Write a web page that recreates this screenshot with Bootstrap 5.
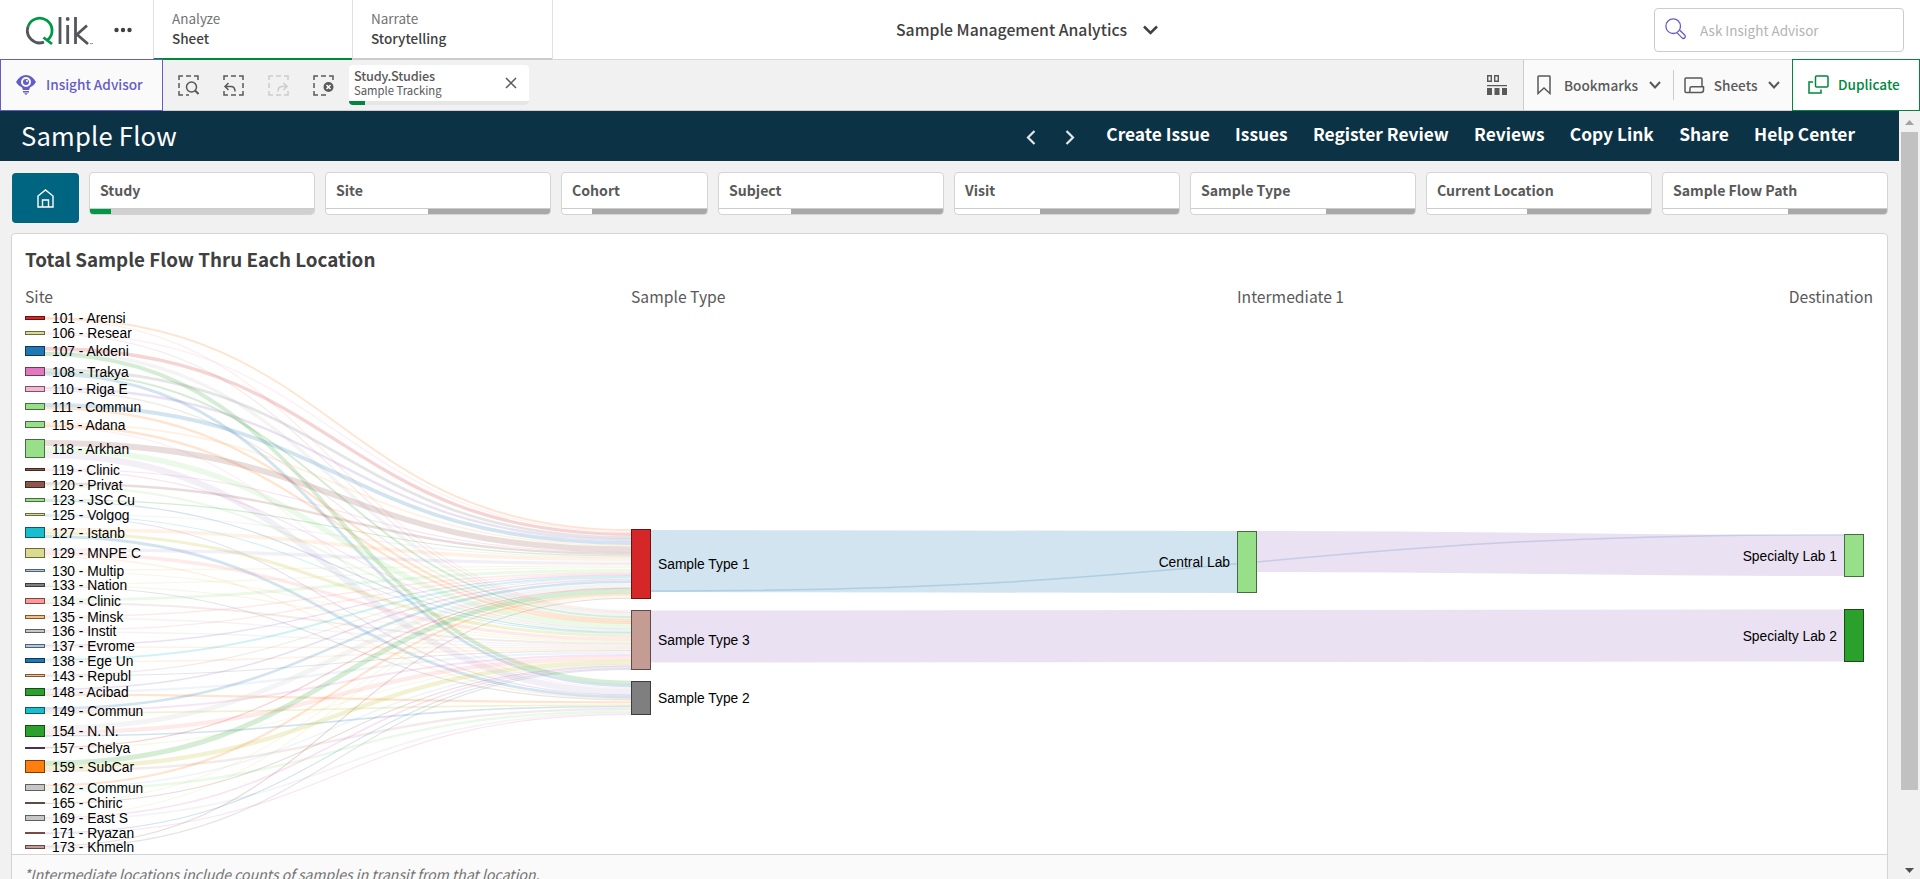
<!DOCTYPE html>
<html lang="en">
<head>
  <meta charset="UTF-8" />
  <title>Sample Management Analytics</title>
  <link href="https://cdn.jsdelivr.net/npm/bootstrap@5.3.3/dist/css/bootstrap.min.css" rel="stylesheet">
  <style>
    body { font-family: "Noto Sans CJK SC", "Noto Sans", sans-serif; background: #f1f1f1; color: #404040; height: 879px; overflow: hidden; line-height: 1.2; }
    svg { display: block; flex: none; }
    svg.ico { fill: none; stroke: #595959; stroke-width: 1.5; }

    .topbar { height: 60px; background: #fff; border-bottom: 1px solid #d9d9d9; }
    .brand-box { width: 153px; padding-left: 25px; }
    .mode-tab { width: 200px; height: 60px; border-left: 1px solid #e0e0e0; border-bottom: 2px solid #ccc; padding: 8px 0 0 18px; font-size: 13.5px; line-height: 20px; color: #737373; }
    .mode-tab.on { width: 199px; border-bottom-color: #00873d; }
    .mode-tab b { display: block; color: #404040; font-weight: 500; }
    .app-name { font-size: 15.75px; font-weight: 500; margin-left: 343px; padding-top: 1px; }
    .app-name svg { stroke: #404040; stroke-width: 2.5; }
    .ask-box { width: 250px; height: 44px; border: 1px solid #ccc; border-radius: 4px; margin-right: 16px; padding: 2px 0 0 10px; font-size: 13.5px; color: #b3b3b3; }
    .ask-box svg { margin: -4px 13px 0 0; }

    .toolbar { height: 51px; border-bottom: 1px solid #d0d0d0; font-size: 13.6px; font-weight: 500; color: #595959; }
    .advisor { width: 163px; height: 52px; margin-top: -1px; border: 1px solid #655dc6; background: #fafafa; color: #655dc6; padding-left: 15px; }
    .sel-tools { gap: 24px; padding: 0 15px; }
    .sel-chip { width: 180px; height: 40px; background: #fff; border-radius: 4px; overflow: hidden; font-size: 12.7px; line-height: 14px; letter-spacing: -.2px; }
    .sel-name { height: 36px; padding: 4px 8px 4px 5px; }
    .sel-name svg { margin-top: 8px; }
    .sel-chip .lower { font-size: 11.3px; font-weight: 400; letter-spacing: 0; }
    .sel-bar { height: 4px; background: #e6e6e6; }
    .sel-bar div { width: 16px; height: 4px; background: #00873d; }
    .tool-group { background: #fafafa; border-left: 1px solid #ccc; width: 269px; }
    .tool-group .chev { stroke-width: 2; margin: 0 12px 0 auto; }
    .dup { width: 128px; height: 52px; margin-top: -1px; border: 1px solid #00873d; background: #fff; color: #00873d; padding-left: 15px; gap: 9px; }

    .sheet-head { height: 50px; background: #0c3245; color: #fff; padding-left: 21px; }
    .sheet-head h1 { font-size: 25.6px; font-weight: 400; letter-spacing: .2px; padding-bottom: 2px; }
    .sheet-head nav { gap: 25.3px; padding-right: 44px; }
    .sheet-head nav svg { margin-top: 2px; fill: none; stroke: #e6e6e6; stroke-width: 2.2; }
    .sheet-head a { color: #fff; text-decoration: none; font-size: 17.35px; font-weight: 700; white-space: nowrap; padding-bottom: 4px; }

    .filters { gap: 10px; padding: 11px 0 0 12px; }
    .home-btn { width: 67px; height: 50px; border-radius: 4px; background: #006580; margin-top: 1px; }
    .filter-box { width: 226px; height: 43px; border: 1px solid #d4d4d4; border-radius: 4px; background: #fff; overflow: hidden; font-size: 14.1px; font-weight: 700; color: #595959; }
    .filter-box.narrow { width: 147px; }
    .filter-box span { height: 36px; padding: 9px 0 0 10px; border-bottom: 1px solid #ccc; }
    .fbar { height: 5px; background: #a8a8a8; }
    .fbar div { height: 5px; background: #fff; }
    .fbar.sel { background: #d0d0d0; }
    .fbar.sel div { background: #009845; }

    .chart-card { width: 1877px; height: 660px; background: #fff; border: 1px solid #d4d4d4; border-radius: 4px; margin: 10px 0 0 11px; }
    .chart-area { height: 620px; padding: 13px 14px 0 13px; }
    .chart-card h2 { font-size: 18.8px; font-weight: 700; margin: 0; height: 24px; line-height: 24px; }
    .dims { font-size: 15.7px; color: #595959; height: 38px; padding-top: 17px; }
    .dims .dim { width: 606px; }
    .note-row { background: #fafafa; border-top: 1px solid #d4d4d4; font-size: 14.1px; font-style: italic; color: #737373; padding: 11px 0 0 12px; height: 40px; }
    #sankey text { font-family: "Liberation Sans", Arial, sans-serif; font-size: 13.8px; fill: #000; }

    .scroll-col { width: 21px; height: 768px; background: #f1f1f1; padding-left: 2px; }
    .thumb { width: 17px; height: 658px; background: #c1c1c1; }
  </style>
</head>
<body>
  <!-- top bar -->
  <header class="topbar d-flex align-items-center">
    <div class="brand-box d-flex align-items-center">
      <svg width="68" height="32" viewBox="0 0 68 32" fill="none" stroke="#54565b" stroke-width="2.8">
        <path d="M19 28.1A12.3 12.3 0 0 1 3.2 12.3"/>
        <path d="M3.2 12.3A12.3 12.3 0 1 1 22.7 25.9M18.5 23.5L27 30" stroke="#009845"/>
        <path d="M35 3V30M42.7 11V30M50.5 3V30M62 11.5L52 20.500L63 30"/>
        <circle cx="42.7" cy="5" r="1.9" fill="#54565b" stroke="none"/>
        <path d="M65 29.5H68" stroke-width="1" stroke="#999"/>
      </svg>
      <svg class="ms-auto" width="40" height="8" viewBox="0 0 40 8" fill="#404040"><circle cx="3.5" cy="4" r="2.2"/><circle cx="10" cy="4" r="2.2"/><circle cx="16.5" cy="4" r="2.2"/></svg>
    </div>
    <div class="mode-tab on">Analyze<b>Sheet</b></div>
    <div class="mode-tab">Narrate<b>Storytelling</b></div>
    <div class="border-end h-100"></div>
    <div class="app-name d-flex align-items-center gap-3">Sample Management Analytics
      <svg width="15" height="10" viewBox="0 0 15 10" fill="none"><path d="M1 1.5L7.5 8L14 1.5"/></svg>
    </div>
    <div class="ask-box ms-auto d-flex align-items-center">
      <svg width="22" height="22" viewBox="0 0 22 22" fill="none" stroke="#655dc6" stroke-width="1.3"><circle cx="8.2" cy="8.2" r="7.3"/><path d="M11.8 14.6L17.3 20.1Q18.7 21 19.8 19.8T19.9 17.3L14.5 12"/></svg>
      Ask Insight Advisor
    </div>
  </header>

  <!-- selections toolbar -->
  <div class="toolbar d-flex align-items-center">
    <div class="advisor d-flex align-items-center gap-2">
      <svg width="22" height="20" viewBox="0 0 22 20" fill="#655dc6"><path fill-rule="evenodd" d="M0 7Q4 0 10 0T20 7Q18 11 14 12.5L13 15H7L6 12.5Q2 11 0 7ZM10 2A5 5 0 1 0 10 12A5 5 0 1 0 10 2Z"/><circle cx="10" cy="7" r="3"/><circle cx="11" cy="6" r="1" fill="#fff"/><path d="M7 16H13V17.5H7ZM8 18.3H12L10 20Z"/></svg>
      Insight Advisor
    </div>
    <div class="sel-tools d-flex">
      <svg class="ico" width="21" height="21" viewBox="0 0 21 21"><path d="M1 5V1H5M8 1H13M16 1H20V5M1 8V13M1 16V20H5M8 20H11"/><circle cx="13.5" cy="12" r="5"/><path d="M17 15.5L20.5 19" stroke-width="2"/></svg>
      <svg class="ico" width="21" height="21" viewBox="0 0 21 21"><path d="M1 5V1H5M8 1H13M16 1H20V5M20 8V13M20 16V20H16M13 20H8M5 20H1V16"/><path d="M5.5 8L2 11.5L5.5 15M2 11.5H8Q12 11.5 12 16.5"/></svg>
      <svg class="ico" width="21" height="21" viewBox="0 0 21 21"><g stroke="#ccc"><path d="M1 5V1H5M8 1H13M16 1H20V5M1 8V13M1 16V20H5M8 20H13M16 20H20V16"/><path d="M15.5 8L19 11.5L15.5 15M19 11.5H14Q10 11.5 10 16.5"/></g></svg>
      <svg class="ico" width="21" height="21" viewBox="0 0 21 21"><path d="M1 5V1H5M8 1H13M16 1H20V5M1 8V13M1 16V20H5M8 20H13"/><circle cx="15.5" cy="12" r="5" fill="#595959" stroke="none"/><path d="M13.5 10L17.5 14M17.5 10L13.5 14" stroke="#fff"/></svg>
    </div>
    <div class="sel-chip">
      <div class="sel-name d-flex justify-content-between">
        <div>Study.Studies<div class="lower">Sample Tracking</div></div>
        <svg class="ico me-1" width="12" height="12" viewBox="0 0 12 12"><path d="M1 1L11 11M11 1L1 11"/></svg>
      </div>
      <div class="sel-bar"><div></div></div>
    </div>
    <svg class="ms-auto me-3" width="19" height="21" viewBox="1 0 19 21" fill="#595959" overflow="visible"><path d="M.7 .7H4.3V6.3H.7ZM7.7 .7H11.3V6.3H7.7Z" fill="none" stroke="#595959" stroke-width="1.4"/><path d="M0 10H20V11.3H0ZM0 13H5V20H0ZM7.5 13H12.5V20H7.5ZM15 13H20V20H15Z"/></svg>
    <div class="tool-group h-100 d-flex align-items-center">
      <svg class="ico" width="40" height="20" viewBox="-13 0 40 20"><path d="M1 1.7Q1 1 1.7 1H12.3Q13 1 13 1.7V18.5L7 13L1 18.5Z"/></svg>
      Bookmarks
      <svg class="ico chev" width="12" height="8" viewBox="0 0 12 8"><path d="M1 1L6 6.5L11 1"/></svg>
      <svg width="1" height="30"><path d="M.5 0V30" stroke="#ccc"/></svg>
      <svg class="ico" width="40" height="17" viewBox="-10 0 40 17"><path d="M5 15.5H2Q1 15.5 1 14.5V2Q1 1 2 1H17Q18 1 18 2V9M7.5 9.7H19.5V13Q19.5 15.5 17 15.5H5Q6 15 6 13V11Q6 9.7 7.5 9.7"/></svg>
      Sheets
      <svg class="ico chev" width="12" height="8" viewBox="0 0 12 8"><path d="M1 1L6 6.5L11 1"/></svg>
    </div>
    <div class="dup d-flex align-items-center">
      <svg width="21" height="19" viewBox="0 0 21 19" fill="none" stroke="#00873d" stroke-width="1.5"><rect x="7.5" y="1" width="12.5" height="11" rx="1"/><path d="M5 7H1V18H13V14.5"/></svg>
      Duplicate
    </div>
  </div>

  <div class="d-flex">
    <main class="flex-grow-1">
      <!-- sheet title bar -->
      <div class="sheet-head d-flex align-items-center">
        <h1 class="m-0">Sample Flow</h1>
        <nav class="ms-auto d-flex align-items-center">
          <svg width="10" height="15" viewBox="0 0 10 15"><path d="M8.5 1L2 7.5L8.5 14"/></svg>
          <svg width="20" height="15" viewBox="-4 0 20 15"><path d="M1.5 1L8 7.5L1.5 14"/></svg>
          <a href="#">Create Issue</a>
          <a href="#">Issues</a>
          <a href="#">Register Review</a>
          <a href="#">Reviews</a>
          <a href="#">Copy Link</a>
          <a href="#">Share</a>
          <a href="#">Help Center</a>
        </nav>
      </div>

      <!-- filter panes -->
      <div class="filters d-flex">
        <div class="home-btn d-flex align-items-center justify-content-center">
          <svg width="17" height="19" viewBox="0 0 17 19" fill="none" stroke="#fff" stroke-width="1.4"><path d="M1 7L8.5 1L16 7V18H1ZM5.5 18V11H11.5V18"/></svg>
        </div>
        <div class="filter-box"><span class="d-block">Study</span><div class="fbar sel"><div style="width:21px"></div></div></div>
        <div class="filter-box"><span class="d-block">Site</span><div class="fbar"><div style="width:102px"></div></div></div>
        <div class="filter-box narrow"><span class="d-block">Cohort</span><div class="fbar"><div style="width:30px"></div></div></div>
        <div class="filter-box"><span class="d-block">Subject</span><div class="fbar"><div style="width:72px"></div></div></div>
        <div class="filter-box"><span class="d-block">Visit</span><div class="fbar"><div style="width:85px"></div></div></div>
        <div class="filter-box"><span class="d-block">Sample Type</span><div class="fbar"><div style="width:135px"></div></div></div>
        <div class="filter-box"><span class="d-block">Current Location</span><div class="fbar"><div style="width:100px"></div></div></div>
        <div class="filter-box"><span class="d-block">Sample Flow Path</span><div class="fbar"><div style="width:125px"></div></div></div>
      </div>

      <!-- flow chart -->
      <section class="chart-card">
        <div class="chart-area">
          <h2>Total Sample Flow Thru Each Location</h2>
          <div class="dims row g-0">
            <div class="dim">Site</div>
            <div class="dim">Sample Type</div>
            <div class="col">Intermediate 1</div>
            <div class="col text-end">Destination</div>
          </div>
          <svg id="sankey" width="1846" height="545" viewBox="25 309 1846 545"></svg>
        </div>
        <div class="note-row">*Intermediate locations include counts of samples in transit from that location.</div>
      </section>
    </main>

    <div class="scroll-col d-flex flex-column">
      <svg width="17" height="21" viewBox="0 0 17 21"><path d="M4 14L8.5 9L13 14Z" fill="#a3a3a3"/></svg>
      <div class="thumb"></div>
      <svg class="mt-auto" width="17" height="17" viewBox="0 0 17 17"><path d="M4 6L8.5 11L13 6Z" fill="#505050"/></svg>
    </div>
  </div>

  <script src="https://cdn.jsdelivr.net/npm/bootstrap@5.3.3/dist/js/bootstrap.bundle.min.js"></script>
  <script>
    const c = {
      blue: '#1f77b4', ltblue: '#aec7e8', orange: '#ff7f0e', ltorange: '#ffbb78',
      green: '#2ca02c', ltgreen: '#98df8a', red: '#d62728', salmon: '#ff9896',
      purple: '#9467bd', lavender: '#c5b0d5', brown: '#8c564b', ltbrown: '#c49c94',
      pink: '#e377c2', ltpink: '#f7b6d2', gray: '#7f7f7f', ltgray: '#c7c7c7',
      olive: '#bcbd22', ltolive: '#dbdb8d', cyan: '#17becf'
    };

    // name, top, bottom, color, links: [source y, target y, width, color]
    const sites = [
      ['101 - Arensi', 316, 320, 'red', [[318, 530, 1.5, 'orange'], [319, 611, .8, 'salmon']]],
      ['106 - Resear', 331, 335, 'ltolive', [[332.5, 531.8, 1, 'ltpink'], [334, 612.3, .8, 'ltbrown']]],
      ['107 - Akdeni', 346, 356, 'blue', [[348.5, 534.3, 3, 'red'], [351.5, 614.3, 3, 'ltgray'], [354, 682.7, 3.5, 'green']]],
      ['108 - Trakya', 367, 376, 'pink', [[369.5, 537.5, 2.5, 'gray'], [372, 617, 1.6, 'green'], [374, 685.8, 2.5, 'blue']]],
      ['110 - Riga E', 386, 392, 'ltpink', [[388, 539.7, 2, 'purple'], [390.5, 619, 1, 'ltbrown']]],
      ['111 - Commun', 403, 410, 'ltgreen', [[405, 543, 3.5, 'blue'], [408, 620.7, 2, 'orange']]],
      ['115 - Adana', 421, 428, 'ltgreen', [[423, 545.7, 1.5, 'ltorange'], [425.5, 622.7, 2, 'orange'], [427, 688, 1, 'ltpink']]],
      ['118 - Arkhan', 439, 458, 'ltgreen', [[443, 549.5, 5.5, 'brown'], [449.5, 626, 5, 'ltgreen'], [455, 692, 6, 'lavender']]],
      ['119 - Clinic', 468, 471, 'brown', [[469, 552.5, .8, 'pink'], [470.3, 629.2, .8, 'pink']]],
      ['120 - Privat', 481, 488, 'brown', [[483.5, 554, 2, 'brown'], [486, 630.7, 1.6, 'ltgreen']]],
      ['123 - JSC Cu', 498, 502, 'ltgreen', [[499.5, 556, .9, 'green'], [501, 632.3, .9, 'blue']]],
      ['125 - Volgog', 513, 516, 'ltolive', [[514, 557.2, .8, 'ltgray'], [515, 633.5, .8, 'cyan'], [516, 695, .8, 'purple']]],
      ['127 - Istanb', 527, 538, 'cyan', [[529.5, 559.3, 3.2, 'ltorange'], [533, 635.7, 2.8, 'olive'], [536.5, 697, 2.5, 'blue']]],
      ['129 - MNPE C', 548, 558, 'ltolive', [[549.8, 563.3, 3, 'lavender'], [553.5, 639, 3, 'salmon'], [557, 698.7, 1, 'ltorange']]],
      ['130 - Multip', 569, 572, 'ltblue', [[570, 566, 1, 'ltolive'], [571.3, 641, 1, 'ltolive']]],
      ['133 - Nation', 583, 587, 'gray', [[584, 567.6, 1, 'ltolive'], [585.3, 642.2, 1, 'ltolive'], [586.5, 699.8, .8, 'gray']]],
      ['134 - Clinic', 598, 604, 'salmon', [[600, 570.5, 2.6, 'ltgreen'], [603, 643.8, 1.6, 'ltbrown']]],
      ['135 - Minsk', 615, 619, 'ltorange', [[616.5, 572.7, 1.2, 'salmon'], [618, 645.5, 1, 'ltgray']]],
      ['136 - Instit', 629, 633, 'ltgray', [[630.5, 574, 1, 'salmon'], [632, 646.7, 1, 'ltgray']]],
      ['137 - Evrome', 644, 648, 'ltblue', [[645.5, 575.2, 1, 'purple'], [647, 648, 1, 'ltorange']]],
      ['138 - Ege Un', 658, 663, 'blue', [[659.8, 576.7, 1.6, 'cyan'], [662, 649.3, 1.2, 'ltorange']]],
      ['143 - Republ', 674, 677, 'ltorange', [[675, 578, .8, 'ltbrown'], [676, 650.5, .8, 'gray']]],
      ['148 - Acibad', 688, 696, 'green', [[689.5, 579.5, 1.2, 'purple'], [692, 652.5, 2, 'ltblue'], [694.6, 702.3, 1.9, 'orange']]],
      ['149 - Commun', 707, 714, 'cyan', [[708.5, 581.8, 2.2, 'blue'], [711, 655, 1.8, 'pink'], [713, 705, 1.3, 'olive']]],
      ['154 - N. N.', 725, 737, 'green', [[728, 585.8, 4.6, 'ltgray'], [732.5, 657.8, 4, 'salmon'], [735.8, 706.5, 1.3, 'blue']]],
      ['157 - Chelya', 747, 749, 'purple', [[747.6, 588.2, .9, 'red'], [748.5, 660, .8, 'ltolive']]],
      ['159 - SubCar', 760, 773, 'orange', [[763.2, 591, 4.6, 'green'], [767.7, 662.2, 4, 'olive'], [771, 708.8, 2, 'ltbrown']]],
      ['162 - Commun', 784, 791, 'ltgray', [[785.5, 594.3, 1.8, 'orange'], [788, 664.8, 1.2, 'ltblue'], [789.8, 711.3, 2, 'ltgreen']]],
      ['165 - Chiric', 802, 804, 'ltbrown', [[802.5, 596, .8, 'ltolive'], [803.5, 666, .8, 'brown']]],
      ['169 - East S', 815, 821, 'ltgray', [[816, 597, .8, 'ltolive'], [817.8, 667.2, 1.4, 'pink'], [819.8, 713, 1.4, 'ltgray']]],
      ['171 - Ryazan', 832, 834, 'salmon', [[833, 668.5, .8, 'blue'], [834, 714.4, .8, 'pink']]],
      ['173 - Khmeln', 845, 849, 'ltbrown', [[846.3, 598.2, .8, 'brown'], [848, 669.5, .8, 'gray']]]
    ];

    // name, x, top, bottom, color, label side
    const stages = [
      ['Sample Type 1', 631, 529, 599, 'red', 'right'],
      ['Sample Type 3', 631, 610, 670, 'ltbrown', 'right'],
      ['Sample Type 2', 631, 681, 715, 'gray', 'right'],
      ['Central Lab', 1237, 531, 593, 'ltgreen', 'left'],
      ['Specialty Lab 1', 1844, 534, 577, 'ltgreen', 'left'],
      ['Specialty Lab 2', 1844, 609, 662, 'green', 'left']
    ];

    function link(x0, y0, x1, y1, w, color) {
      const xm = (x0 + x1) / 2;
      return `<path d="M${x0},${y0}C${xm},${y0} ${xm},${y1} ${x1},${y1}" fill="none" stroke="${c[color]}" stroke-width="${w}" stroke-opacity=".2"/>`;
    }

    // darker outline for a node
    function shade(hex) {
      const n = parseInt(hex.slice(1), 16);
      return `rgb(${[n >> 16, n >> 8 & 255, n & 255].map(v => Math.round(v * .48)).join()})`;
    }

    function node(name, x, top, bottom, color, side) {
      const mid = (top + bottom) / 2 + 5;
      const tx = side === 'right' ? x + 27 : x - 7;
      const anchor = side === 'right' ? 'start' : 'end';
      return `<rect x="${x + .5}" y="${top + .5}" width="19" height="${bottom - top - 1}" fill="${c[color]}" stroke="${shade(c[color])}"/>
        <text x="${tx}" y="${mid}" text-anchor="${anchor}">${name}</text>`;
    }

    let out = '';
    sites.forEach(s => s[4].forEach(l => out += link(45, l[0], 631, l[1], l[2] + .35, l[3])));
    out += link(651, 561, 1237, 562, 62, 'blue');
    out += link(651, 591, 1844, 534.7, 1.5, 'blue');
    out += link(1257, 551.5, 1844, 555.5, 41, 'purple');
    out += link(651, 636.5, 1844, 635.5, 52, 'purple');
    sites.forEach(s => out += node(s[0], 25, s[1], s[2], s[3], 'right'));
    stages.forEach(s => out += node(...s));
    document.getElementById('sankey').innerHTML = out;
  </script>
</body>
</html>
